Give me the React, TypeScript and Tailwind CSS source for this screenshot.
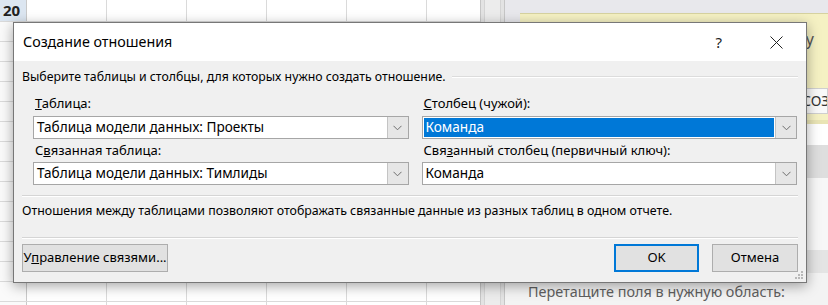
import React from 'react';

const Chevron = () => (
  <svg width="9" height="6" viewBox="0 0 9 6" fill="none">
    <path d="M0.5 0.8L4.5 4.8L8.5 0.8" stroke="#6d6d6d" strokeWidth="1" />
  </svg>
);

const Combo = ({ value, selected }: { value: string; selected?: boolean }) => (
  <div className="flex h-[23px] border border-[#a6a6a6] bg-white text-[13.6px]">
    <div className="flex flex-1 p-[1px]">
      {selected ? (
        <span className="flex w-full items-center bg-[#0078d7] pl-[2px] text-white">{value}</span>
      ) : (
        <span className="flex w-full items-center pl-[2px]">{value}</span>
      )}
    </div>
    <div className="flex w-[21px] items-center justify-center border-l border-[#c4c4c4] bg-[#e6e6e6]">
      <Chevron />
    </div>
  </div>
);

const Btn = ({ children, primary, className }: { children: React.ReactNode; primary?: boolean; className: string }) => (
  <div
    className={
      'flex h-[28px] items-center justify-center bg-[#e1e1e1] ' +
      (primary ? 'border-2 border-[#0078d7] ' : 'border border-[#adadad] ') +
      className
    }
  >
    {children}
  </div>
);

const GridRow = ({ h, header }: { h: string; header?: string }) => (
  <div className={`flex shrink-0 border-b border-[#dadada] ${h}`}>
    <div
      className={
        'w-[27px] shrink-0 border-r border-[#c9c9c9] pl-[3px] text-[15px] font-bold leading-[21px] text-[#222] ' +
        (header ? 'bg-[#dce6f1]' : 'bg-[#fafafa]')
      }
    >
      {header}
    </div>
    <div className="w-[80px] shrink-0 border-r border-[#dadada]" />
    <div className="w-[80px] shrink-0 border-r border-[#dadada]" />
    <div className="w-[80px] shrink-0 border-r border-[#dadada]" />
    <div className="w-[80px] shrink-0 border-r border-[#dadada]" />
    <div className="w-[80px] shrink-0 border-r border-[#dadada]" />
    <div className="flex-1" />
  </div>
);

export default function App() {
  const rows = Array.from({ length: 15 });
  return (
    <div className="relative h-[305px] w-[828px] overflow-hidden bg-white font-['Noto_Sans',sans-serif] text-[13px] text-black">
      {/* Excel background */}
      <div className="flex h-full">
        <div className="flex w-[480px] shrink-0 flex-col">
          <GridRow h="h-[22px]" header="20" />
          {rows.map((_, i) => (
            <GridRow key={i} h="h-[20px]" />
          ))}
        </div>
        <div className="flex w-[25px] shrink-0 border-x border-[#c6c6c6] bg-[#e3e3e3]">
          <div className="mx-auto h-full w-[17px] border-x border-[#d4d4d4] bg-[#ececec]" />
        </div>
        <div className="flex min-w-0 flex-1 flex-col overflow-hidden bg-[#e8e8ec]">
          <div className="h-[13px] shrink-0" />
          <div className="ml-[15px] flex h-[107px] shrink-0 flex-col overflow-hidden border-t border-[#d6d2a0] bg-[#f5f1c3]">
            <div className="flex h-[50px] items-center justify-end pr-[14px] text-[16px] text-[#555]">между</div>
            <div className="mt-[24px] flex h-[26px] overflow-hidden border border-[#cfcfcf] bg-[#f9f9f9] text-[14px] leading-[24px] text-[#333]">
              <span className="ml-[281px] shrink-0">СОЗДАТЬ</span>
            </div>
          </div>
          <div className="ml-[15px] h-[25px] shrink-0 border-t-4 border-[#e9e4b5] bg-white" />
          <div className="ml-[15px] h-[33px] shrink-0 bg-[#dedede]" />
          <div className="ml-[15px] h-[72px] shrink-0 bg-[#f7f7f7]" />
          <div className="ml-[15px] h-[23px] shrink-0 bg-[#e4e4e4]" />
          <div className="h-[10px] shrink-0 bg-[#f3f3f3]" />
          <div className="flex-1 whitespace-nowrap bg-[#f3f3f3] pl-[23px] text-[14.4px] leading-[18px] text-[#5f5f5f]">
            Перетащите поля в нужную область:
          </div>
        </div>
      </div>

      {/* Dialog */}
      <div className="absolute left-[13px] top-[22px] flex h-[261px] w-[794px] flex-col border border-[#777] bg-[#f0f0f0] shadow-[0_3px_12px_rgba(0,0,0,0.35)]">
        <div className="flex h-[38px] shrink-0 items-center bg-white pl-[9px] pr-[23px]">
          <span className="flex-1 text-[14.3px] text-black">Создание отношения</span>
          <span className="mr-[48px] text-[15px] text-[#222]">?</span>
          <svg width="13" height="13" viewBox="0 0 13 13" fill="none">
            <path d="M0.5 0.5L12.5 12.5M12.5 0.5L0.5 12.5" stroke="#222" strokeWidth="1" />
          </svg>
        </div>

        <div className="flex flex-1 flex-col px-[8px] pt-[8px]">
          <div className="flex h-[16px] items-center leading-[16px]">
            <span className="text-[12.3px]">Выберите таблицы и столбцы, для которых нужно создать отношение.</span>
            <div className="ml-[6px] h-[2px] flex-1 border-y border-t-[#dcdcdc] border-b-white" />
          </div>

          <div className="mt-[10px] grid grid-cols-2 gap-x-[13px] pl-[11px] pr-[1px]">
            <div className="flex flex-col">
              <span className="h-[16px] pl-[2px] leading-[16px]">
                <u>Т</u>аблица:
              </span>
              <div className="mt-[5px]">
                <Combo value="Таблица модели данных: Проекты" />
              </div>
              <span className="mt-[3px] h-[16px] pl-[2px] leading-[16px]">
                С<u>в</u>язанная таблица:
              </span>
              <div className="mt-[4px]">
                <Combo value="Таблица модели данных: Тимлиды" />
              </div>
            </div>
            <div className="flex flex-col">
              <span className="h-[16px] pl-[2px] leading-[16px]">
                <u>С</u>толбец (чужой):
              </span>
              <div className="mt-[5px]">
                <Combo value="Команда" selected />
              </div>
              <span className="mt-[3px] h-[16px] pl-[2px] leading-[16px]">
                Свя<u>з</u>анный столбец (первичный ключ):
              </span>
              <div className="mt-[4px]">
                <Combo value="Команда" />
              </div>
            </div>
          </div>

          <div className="mt-[10px] h-[2px] border-y border-t-[#d5d5d5] border-b-white" />
          <div className="mt-[6px] h-[16px] text-[12.4px] leading-[16px]">
            Отношения между таблицами позволяют отображать связанные данные из разных таблиц в одном отчете.
          </div>
          <div className="mt-[18px] h-[2px] border-y border-t-[#d5d5d5] border-b-white" />

          <div className="mt-[5px] flex items-center">
            <Btn className="w-[146px]">
              <span>
                У<u>п</u>равление связями...
              </span>
            </Btn>
            <div className="flex-1" />
            <Btn primary className="w-[85px]">
              OK
            </Btn>
            <Btn className="ml-[13px] w-[86px]">Отмена</Btn>
          </div>
        </div>

        <svg className="absolute bottom-[2px] right-[2px]" width="9" height="9" viewBox="0 0 9 9">
          <rect x="6" y="0" width="2" height="2" fill="#b8b8b8" />
          <rect x="3" y="3" width="2" height="2" fill="#b8b8b8" />
          <rect x="6" y="3" width="2" height="2" fill="#b8b8b8" />
          <rect x="0" y="6" width="2" height="2" fill="#b8b8b8" />
          <rect x="3" y="6" width="2" height="2" fill="#b8b8b8" />
          <rect x="6" y="6" width="2" height="2" fill="#b8b8b8" />
        </svg>
      </div>
    </div>
  );
}
